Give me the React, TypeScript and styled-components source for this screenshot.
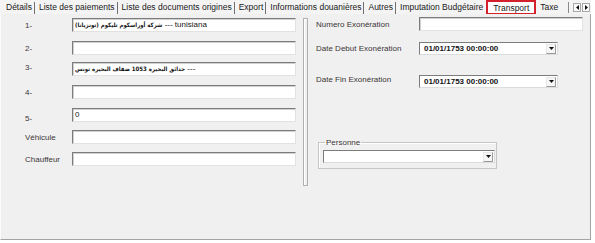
import React from "react";
import styled, { createGlobalStyle } from "styled-components";

const GlobalStyle = createGlobalStyle`
  html, body {
    margin: 0;
    padding: 0;
    background: #ffffff;
  }
  body {
    font-family: "Liberation Sans", Arial, sans-serif;
  }
`;

const Window = styled.div`
  width: 595px;
  height: 243px;
  background: #ffffff;
  overflow: hidden;
`;

const TabStrip = styled.div`
  display: flex;
  align-items: stretch;
  width: 591px;
  height: 14px;
  box-sizing: border-box;
  padding-left: 2px;
  background: #f4f4f4;
`;

const Tab = styled.div<{ $active?: boolean; $sep?: boolean }>`
  display: flex;
  align-items: center;
  padding: 0 2px 1px 4px;
  font-size: 8.5px;
  color: #202020;
  white-space: nowrap;
  position: relative;
  box-sizing: border-box;
  flex-shrink: 0;
  ${(p) =>
    p.$active
      ? `
    border: 2px solid #d3202c;
    border-bottom-width: 1px;
    background: #ffffff;
    padding: 0 5px 0 5px;
    margin-left: 1px;
  `
      : ""}
  ${(p) =>
    p.$sep
      ? `
    padding-right: 3px;
    &::after {
      content: "";
      position: absolute;
      right: 0;
      top: 2px;
      bottom: 0;
      width: 1px;
      background: #6f6f6f;
    }
  `
      : ""}
`;

const Spacer = styled.div`
  flex: 1;
`;

const ScrollButtons = styled.div`
  display: flex;
  align-items: center;
  gap: 1px;
  padding: 0 1px 0 4px;
  border-left: 1px solid #8a8a8a;
  margin: 2px 0 1px 0;
`;

const ScrollButton = styled.div`
  width: 8px;
  height: 9px;
  box-sizing: border-box;
  border: 1px solid #a8a8a8;
  background: #fafafa;
  display: flex;
  align-items: center;
  justify-content: center;
`;

const Page = styled.div`
  display: flex;
  width: 591px;
  height: 226px;
  box-sizing: border-box;
  background: #f0f0f0;
  border-left: 1px solid #fbfbfb;
  border-right: 1px solid #a4a4a4;
  border-bottom: 1px solid #a4a4a4;
`;

const LeftColumn = styled.div`
  display: flex;
  flex-direction: column;
  width: 302px;
  flex-shrink: 0;
  padding-top: 4px;
`;

const Row = styled.div<{ $mt?: number }>`
  display: flex;
  align-items: center;
  margin-top: ${(p) => p.$mt ?? 0}px;
`;

const RowLabel = styled.div<{ $dy?: number }>`
  width: 47px;
  padding-left: 24px;
  flex-shrink: 0;
  font-size: 8px;
  color: #3c3636;
  position: relative;
  top: ${(p) => p.$dy ?? 0}px;
`;

const TextBox = styled.div<{ $width: number }>`
  width: ${(p) => p.$width}px;
  height: 14px;
  flex-shrink: 0;
  box-sizing: border-box;
  background: #ffffff;
  border-top: 1px solid #7c7c7c;
  border-left: 1px solid #7c7c7c;
  border-right: 1px solid #e2e2e2;
  border-bottom: 1px solid #e2e2e2;
  box-shadow: inset 1px 1px 0 #d0d0d0;
  font-size: 8px;
  line-height: 12px;
  color: #141414;
  padding-left: 2px;
  white-space: nowrap;
  overflow: hidden;
`;

const Arabic = styled.span`
  font-family: "DejaVu Sans Condensed", "DejaVu Sans", sans-serif;
  font-size: 6px;
  font-weight: bold;
  unicode-bidi: isolate;
`;

const Splitter = styled.div`
  width: 5px;
  height: 168px;
  margin-top: 4px;
  flex-shrink: 0;
  box-sizing: border-box;
  border: 1px solid #b0b0b0;
  box-shadow: inset 1px 1px 0 #ffffff;
`;

const RightColumn = styled.div`
  display: flex;
  flex-direction: column;
  padding-left: 8px;
  padding-top: 3px;
`;

const FieldRow = styled.div<{ $top: number }>`
  display: flex;
  align-items: center;
  margin-top: ${(p) => p.$top}px;
`;

const FieldLabel = styled.div<{ $dy?: number }>`
  width: 103px;
  flex-shrink: 0;
  font-size: 8px;
  color: #3c3636;
  position: relative;
  top: ${(p) => p.$dy ?? 0}px;
`;

const Combo = styled.div<{ $width: number }>`
  display: flex;
  align-items: center;
  width: ${(p) => p.$width}px;
  height: 13px;
  flex-shrink: 0;
  box-sizing: border-box;
  background: #ffffff;
  border-top: 1px solid #7c7c7c;
  border-left: 1px solid #7c7c7c;
  border-right: 1px solid #dcdcdc;
  border-bottom: 1px solid #dcdcdc;
  padding-left: 4px;
`;

const ComboValue = styled.span`
  flex: 1;
  font-size: 8px;
  font-weight: bold;
  color: #141414;
  white-space: nowrap;
`;

const ComboButton = styled.div`
  width: 10px;
  height: 10px;
  margin-right: 1px;
  box-sizing: border-box;
  border: 1px solid #9a9a9a;
  border-top-color: #e8e8e8;
  border-left-color: #e8e8e8;
  background: #f6f6f6;
  display: flex;
  align-items: center;
  justify-content: center;
`;

const GroupBox = styled.fieldset`
  width: 179px;
  margin: 50px 0 0 2px;
  padding: 3px 1px 5px 4px;
  box-sizing: border-box;
  border: 1px solid #c6c6c6;
  box-shadow: inset 1px 1px 0 #ffffff;
`;

const GroupLegend = styled.legend`
  padding: 0 1px;
  margin-left: 2px;
  font-size: 8px;
  line-height: 9px;
  color: #3c3636;
`;

const Arrow = () => (
  <svg width="5" height="3" viewBox="0 0 5 3">
    <path d="M0 0 H5 L2.5 3 Z" fill="#111" />
  </svg>
);

const SideArrow = ({ dir }: { dir: "left" | "right" }) => (
  <svg width="3" height="5" viewBox="0 0 3 5">
    <path d={dir === "left" ? "M3 0 V5 L0 2.5 Z" : "M0 0 V5 L3 2.5 Z"} fill="#111" />
  </svg>
);

const tabs = [
  "Détails",
  "Liste des paiements",
  "Liste des documents origines",
  "Export",
  "Informations douanières",
  "Autres",
];

const App: React.FC = () => {
  return (
    <Window>
      <GlobalStyle />
      <TabStrip>
        {tabs.map((t) => (
          <Tab key={t} $sep>
            {t}
          </Tab>
        ))}
        <Tab>Imputation Budgétaire</Tab>
        <Tab $active>Transport</Tab>
        <Tab>Taxe</Tab>
        <Spacer />
        <ScrollButtons>
          <ScrollButton>
            <SideArrow dir="left" />
          </ScrollButton>
          <ScrollButton>
            <SideArrow dir="right" />
          </ScrollButton>
        </ScrollButtons>
      </TabStrip>
      <Page>
        <LeftColumn>
          <Row>
            <RowLabel>1-</RowLabel>
            <TextBox $width={224}>
              <Arabic>شركة أوراسكوم تليكوم (تونزيانا)</Arabic> --- tunisiana
            </TextBox>
          </Row>
          <Row $mt={9}>
            <RowLabel>2-</RowLabel>
            <TextBox $width={224} />
          </Row>
          <Row $mt={7}>
            <RowLabel $dy={-2}>3-</RowLabel>
            <TextBox $width={224}>
              <Arabic>حدائق البحيرة 1053 ضفاف البحيرة تونس</Arabic> ---
            </TextBox>
          </Row>
          <Row $mt={9}>
            <RowLabel>4-</RowLabel>
            <TextBox $width={224} />
          </Row>
          <Row $mt={9}>
            <RowLabel $dy={3}>5-</RowLabel>
            <TextBox $width={224}>0</TextBox>
          </Row>
          <Row $mt={8}>
            <RowLabel>Véhicule</RowLabel>
            <TextBox $width={224} />
          </Row>
          <Row $mt={8}>
            <RowLabel>Chauffeur</RowLabel>
            <TextBox $width={224} />
          </Row>
        </LeftColumn>
        <Splitter />
        <RightColumn>
          <FieldRow $top={0}>
            <FieldLabel>Numero Exonération</FieldLabel>
            <TextBox $width={164} />
          </FieldRow>
          <FieldRow $top={11}>
            <FieldLabel>Date Debut Exonération</FieldLabel>
            <Combo $width={139}>
              <ComboValue>01/01/1753 00:00:00</ComboValue>
              <ComboButton>
                <Arrow />
              </ComboButton>
            </Combo>
          </FieldRow>
          <FieldRow $top={20}>
            <FieldLabel $dy={-2}>Date Fin Exonération</FieldLabel>
            <Combo $width={139}>
              <ComboValue>01/01/1753 00:00:00</ComboValue>
              <ComboButton>
                <Arrow />
              </ComboButton>
            </Combo>
          </FieldRow>
          <GroupBox>
            <GroupLegend>Personne</GroupLegend>
            <Combo $width={172}>
              <ComboValue />
              <ComboButton>
                <Arrow />
              </ComboButton>
            </Combo>
          </GroupBox>
        </RightColumn>
      </Page>
    </Window>
  );
};

export default App;
